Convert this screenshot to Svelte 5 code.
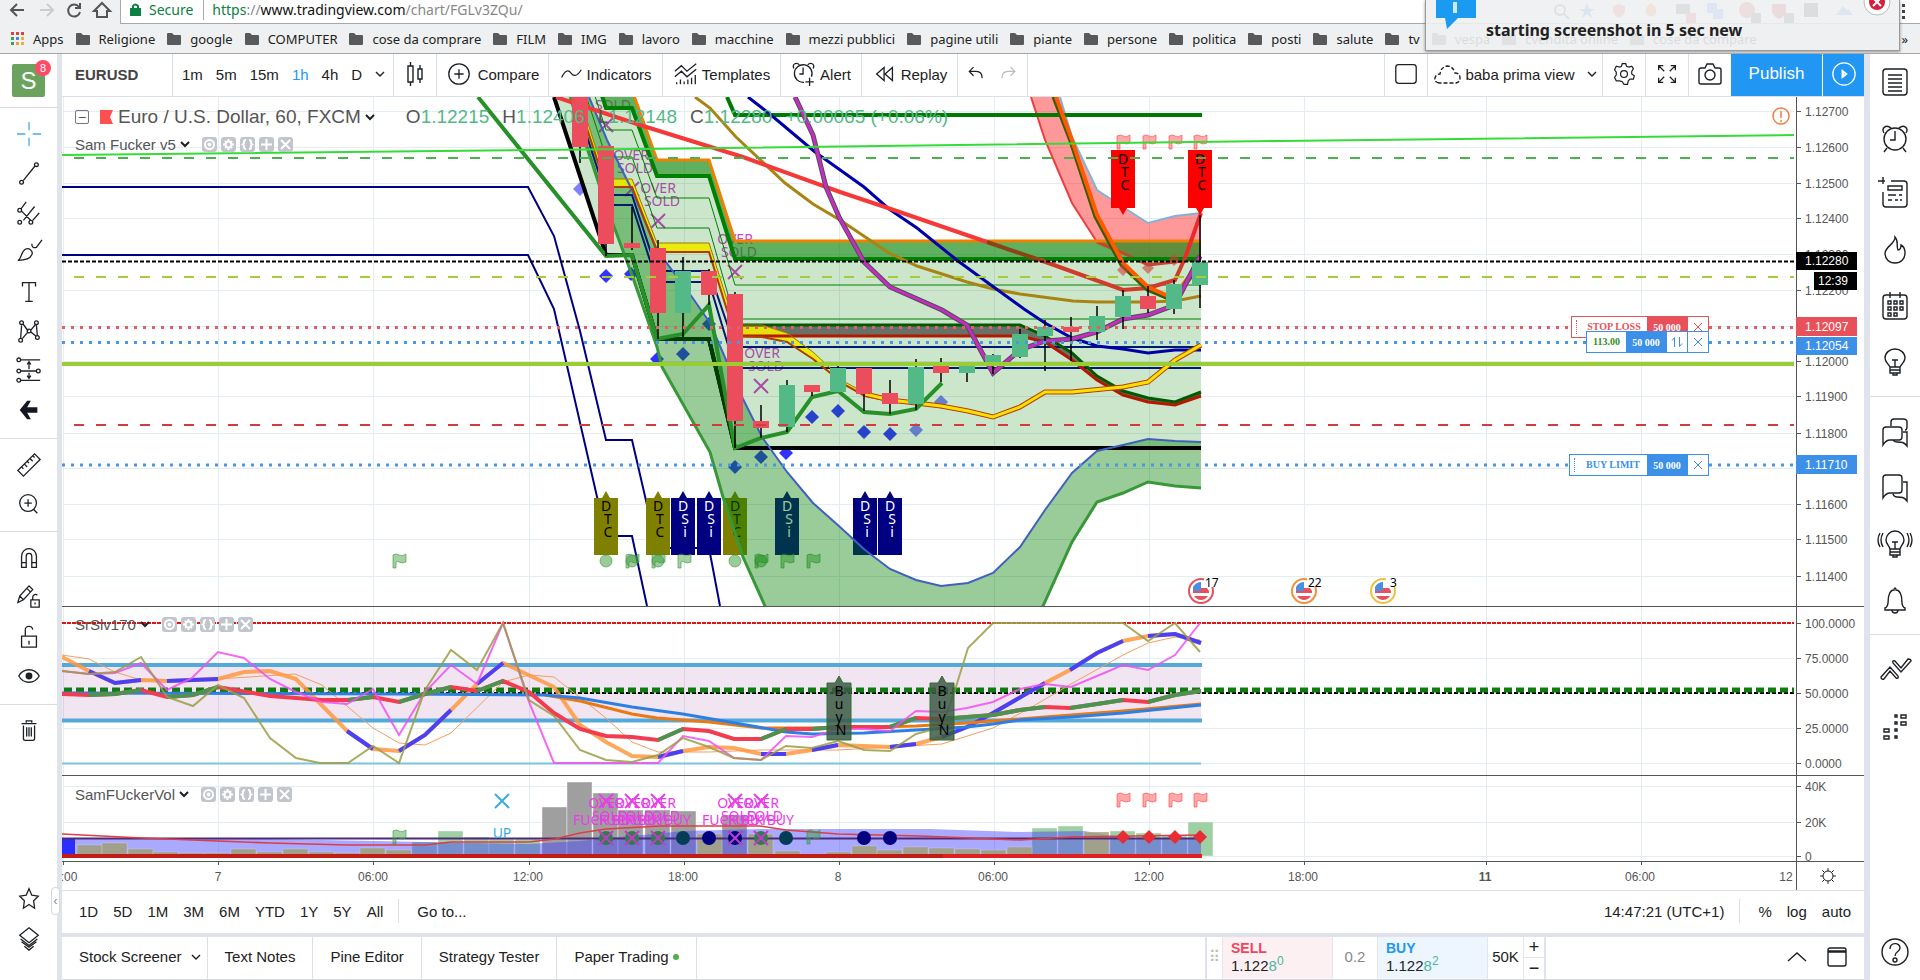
<script>
    const bookmarks = ['Religione', 'google', 'COMPUTER', 'cose da comprare', 'FILM', 'IMG', 'lavoro', 'macchine', 'mezzi pubblici', 'pagine utili', 'piante', 'persone', 'politica', 'posti', 'salute', 'tv', 'vespa', 'cvendita online', 'cose da compare'];
    const appColors = ['#d8453b', '#d8453b', '#d8453b', '#3f9c5a', '#4a86e8', '#e8b23a', '#3f9c5a', '#e8a33a', '#e8b23a'];

    // stroke icons, 28 x 28
    const icons = {
        cross: 'M14 1v9M14 18v9M1 14h9M18 14h9',
        line: 'M8 22L20 7M8 24a2 2 0 1 1-4 0a2 2 0 1 1 4 0M24 5a2 2 0 1 1-4 0a2 2 0 1 1 4 0',
        fork: 'M5 10L11 2M6 12L16 22M8 22L20 7M18 22L25 14M6 11a2 2 0 1 1-4 0a2 2 0 1 1 4 0M6 24a2 2 0 1 1-4 0a2 2 0 1 1 4 0M18 24a2 2 0 1 1-4 0a2 2 0 1 1 4 0',
        brush: 'M2 23c4-1 3-9 8-12c4-2 9 2 7 6c-2 5-8 6-15 6zM17 5c0 4 2 5 5 4l6-8',
        text: 'M7 8V4h14v4M14 4v20M10 24h8',
        pattern: 'M6 8L5 22M8 7l5 7M16 13l5-6M7 22l6-7M16 15l6 5M22 8l1 11M8 5a2 2 0 1 1-4 0a2 2 0 1 1 4 0M24 5a2 2 0 1 1-4 0a2 2 0 1 1 4 0M16 14a2 2 0 1 1-4 0a2 2 0 1 1 4 0M7 24a2 2 0 1 1-4 0a2 2 0 1 1 4 0M25 21a2 2 0 1 1-4 0a2 2 0 1 1 4 0',
        range: 'M5 2h21M5 14h17M5 24h21M14 5v7M14 16v6M12 7l2-3l2 3M12 19l2 3l2-3M5 2a2 2 0 1 1-4 0a2 2 0 1 1 4 0M5 14a2 2 0 1 1-4 0a2 2 0 1 1 4 0M26 14a2 2 0 1 1-4 0a2 2 0 1 1 4 0M5 24a2 2 0 1 1-4 0a2 2 0 1 1 4 0',
        ruler: 'M2 20L20 2l6 6L8 26zM6 16l2 2M9 13l3 3M12 10l2 2M15 7l3 3M18 4l2 2',
        zoom: 'M22 13a9 9 0 1 1-18 0a9 9 0 1 1 18 0M19 20l4 4M13 9v8M9 13h8',
        magnet: 'M6 24V12a8 8 0 0 1 16 0v12h-5V12a3 3 0 0 0-6 0v12zM6 19h5M17 19h5',
        penlock: 'M2 20l2-7L14 2l4 4L8 17zM4 13l4 4M12 5l4 4M16 17h9v8h-9zM18 17v-3a3 3 0 0 1 5-2M20.500 20v2',
        lock: 'M6 13h16v12H6zM10 13V7a4 4 0 0 1 8-1M14 18v4',
        eye: 'M3 14c5-9 17-9 22 0c-5 9-17 9-22 0zM16 14a2 2 0 1 1-4 0a2 2 0 1 1 4 0M15 14a1 1 0 1 1-2 0a1 1 0 1 1 2 0M17 14a3 3 0 1 1-6 0a3 3 0 1 1 6 0',
        trash: 'M6 6h16M11 5V3h6v2M8 8v14q0 2 2 2h8q2 0 2-2V8M11.500 10v10M14 10v10M16.500 10v10',
        star: 'M14 4l3 7l7 1l-5 5l1 8l-6-4l-6 4l1-8l-5-5l7-1z',
        layers: 'M14 3l10 8l-10 8l-10-8zM5 15l9 7l9-7M6 18l8 6l8-6M9 23l5 4l5-4',
        list: 'M5 1h18q3 0 3 3v20q0 3-3 3H5q-3 0-3-3V4q0-3 3-3zM7 7h14M7 11h14M7 15h14M7 19h14M7 23h14',
        alarm: 'M25 15a11 11 0 1 1-22 0a11 11 0 1 1 22 0M14 7v9H9M3 9C0 4 5 0 10 4M25 9c3-5-2-9-7-5M6 24l-3 4M22 24l3 4',
        data: 'M10 1h13q3 0 3 3v20q0 3-3 3H5q-3 0-3-3V12M2-3v7M-3 1h7M7 6h14v4H7zM7 15h8M18 15h3M7 20h4M14 20h3M19 20h2',
        flame: 'M14 1c1 6-9 9-10 16c0 6 4 10 10 10s10-4 10-10c0-4-2-7-4-8c0 3-1 5-3 5c-2-4 1-9-3-13z',
        calendar: 'M5 3h18q3 0 3 3v18q0 3-3 3H5q-3 0-3-3V6q0-3 3-3zM9 0v6M19 0v6M7 9h3v3H7zM13 9h3v3h-3zM19 9h3v3h-3zM7 15h3v3H7zM13 15h3v3h-3zM19 15h3v3h-3zM7 21h3v3H7zM13 21h3v3h-3z',
        bulb: 'M9 19c-2-4-5-5-5-9a10 9 0 0 1 20 0c0 4-3 5-5 9zM11 12h6M14 12v7M9 19v6h10v-6M9 22h10M12 25v2h4v-2',
        chats: 'M10 8V4q0-3 3-3h9q4 0 4 3v5q0 3-2 3M5 9h13q3 0 3 3v7q0 3-3 3H9q-4 0-7 5V12q0-3 3-3zM22 14h4v14c-3-4-5-4-10-4q-3 0-4-2',
        chat: 'M5 1h13q3 0 3 3v12q0 3-3 3H9q-4 0-7 5V4q0-3 3-3zM22 8h4v19c-3-4-5-4-10-4q-3 0-4-3',
        live: 'M9 19c-1-4-4-5-4-9a9 9 0 0 1 18 0c0 4-3 5-4 9zM11 12h6M14 12v7M9 19v6h10v-6M9 22h10M12 25v2h4v-2M2 3q-4 7 0 14M-1 3q-4 7 0 14M26 3q4 7 0 14M29 3q4 7 0 14',
        bell: 'M4 22c5-2 2-8 4-13c1-3 3-5 5-5q0-2 1-2q1 0 1 2c2 0 4 2 5 5c2 5-1 11 4 13v2H4zM11 24q0 3 3 3t3-3',
        arrows: 'M0 21l9-10l8 9q1 3-2 2l-6-7l-6 8q-3 1-3-2zM12 7q-1-3 2-2l6 7l7-9q3 0 3 2L20 16z',
        dots: 'M14 3h2v2h-2zM14 10h2v2h-2zM20 3h5v3h-5zM20 10h5v3h-5zM3 17h5v3H3zM3 24h5v3H3zM14 17h2v2h-2zM14 24h2v2h-2z',
        help: 'M27 14a13 13 0 1 1-26 0a13 13 0 1 1 26 0M9 11c0-7 10-7 10-1c0 4-5 3-5 8M16 22a2 2 0 1 1-4 0a2 2 0 1 1 4 0',
        candles: 'M7 6h5v16H7zM9.500 2v4M9.500 22v4M17 9h4v10h-4zM19 5v4M19 19v4',
        plus: 'M25 14a11 11 0 1 1-22 0a11 11 0 1 1 22 0M14 9v10M9 14h10',
        wave: 'M3 18q6-12 11-5t12-4',
        templates: 'M2 11l7-6l6 6l10-8M2 17l7-6l6 6l10-8M4 25v-2M8 25v-5M12 25v-3M16 25v-5M20 25v-7M24 25v-10',
        alert: 'M14 23A9.500 9.500 0 1 1 22 17M13 7v7H9M3 8C1 3 6 1 9 4M24 8c2-5-3-7-6-4M20 18v9M15.500 22.500h9',
        replay: 'M13 7l-8 7l8 7zM22 7l-8 7l8 7z',
        undo: 'M10 6l-5 5l5 5M5 11h8q7 0 7 8',
        redo: 'M17 6l5 5l-5 5M22 11h-8q-7 0-7 8',
        square: 'M6 4h16q3 0 3 3v14q0 3-3 3H6q-3 0-3-3V7q0-3 3-3z',
        cog: 'M12 2h4l1 3l3 1l3-1l2 3l-2 3v3l3 2l-1 4l-4 0l-2 2l-1 4h-4l-2-3l-3-1l-4 0l-2-4l2-3v-3l-2-3l2-4l4 1l2-1zM18 14a4 4 0 1 1-8 0a4 4 0 1 1 8 0',
        full: 'M5 10V5h5M5 5l6 6M18 5h5v5M23 5l-6 6M5 18v5h5M5 23l6-6M23 18v5h-5M23 23l-6-6',
        camera: 'M5 8h4l2-4h6l2 4h4q2 0 2 2v12q0 2-2 2H5q-2 0-2-2V10q0-2 2-2zM19 15a5 5 0 1 1-10 0a5 5 0 1 1 10 0',
        play: 'M26 14a12 12 0 1 1-24 0a12 12 0 1 1 24 0M12 10v8l5-4zM13 12v4l3-2z',
        sun: 'M21 14a7 7 0 1 1-14 0a7 7 0 1 1 14 0M14 3v4M14 21v4M3 14h4M21 14h4M6 6l3 3M19 19l3 3M22 6l-3 3M6 22l3-3',
        remove: 'M6 6l16 16M22 6L6 22',
        swap: 'M9 24V5l-5 6M19 4v19l5-6'
    };

    const drawTools = ['cross', 'line', 'fork', 'brush', 'text', 'pattern', 'range', 'back'];
    const sideTop = ['list', 'alarm', 'data', 'flame', 'calendar', 'bulb'];
    const sideMid = ['chats', 'chat', 'live', 'bell'];
    const ranges = ['1D', '5D', '1M', '3M', '6M', 'YTD', '1Y', '5Y', 'All'];

    const prices = [['1.12700', 111], ['1.12600', 147], ['1.12500', 183], ['1.12400', 218], ['1.12300', 254], ['1.12200', 290], ['1.12000', 361], ['1.11900', 396], ['1.11800', 433], ['1.11600', 504], ['1.11500', 539], ['1.11400', 576]];
    const levels = [['100.0000', 623], ['75.0000', 658], ['50.0000', 693], ['25.0000', 728], ['0.0000', 763], ['40K', 786], ['20K', 822], ['0', 856]];
    const times = [[':00', 69, 63], ['7', 218, 218], ['06:00', 373, 373], ['12:00', 528, 529], ['18:00', 683, 684], ['8', 838, 839], ['06:00', 993, 994], ['12:00', 1149, 1149], ['18:00', 1303, 1304], ['11', 1485, 1486], ['06:00', 1640, 1641], ['12', 1786, 1796]];

    // the channel holds its level on three shelves and drops between them
    const shelf = (a, b, c) => `580,${a - 80} 606,${a} 632,${a} 657,${b} 709,${b} 735,${c} 1201,${c}`;
    const back = (pts) => pts.split(' ').reverse().join(' ');
    const bandTop = shelf(90, 160, 241);
    const bandLow = shelf(108, 176, 259);
    const floor = '554,97 606,255 632,255 657,339 709,339 735,448 1201,448';
    const yellowTop = '580,99 606,179 632,179 657,243 709,243 735,325 762,325 787,333 813,352 845,382 865,393 890,399 916,403 941,405 968,410 993,417 1020,407 1045,392 1072,392 1123,387 1148,382 1175,360 1201,345';
    const yellowLow = '580,107 606,187 632,187 657,252 709,252 735,336 762,337 787,342 813,359 845,385 865,396 890,401 916,404 941,407 968,412 993,418 1020,408 1045,393 1072,393 1123,388 1148,383 1175,361 1201,346';
    const yellowTail = '865,394 890,400 916,403 941,406 968,411 993,417 1020,407 1045,392 1072,392 1123,387 1148,382 1175,360 1201,345';
    const greyTop = '735,325 1020,325 1045,336 1072,353 1097,376 1123,391 1148,398 1175,402 1201,392';
    const greyLow = '735,336 1020,336 1045,342 1072,360 1097,380 1123,395 1148,402 1175,405 1201,396';
    const lowBlue = '589,97 607,140 632,190 657,250 692,297 710,323 743,399 762,437 787,472 813,503 840,527 865,550 890,569 916,580 941,586 968,583 993,573 1020,547 1045,510 1072,473 1097,451 1123,445 1148,439 1175,441 1201,442';
    const lowGreen = '570,97 606,205 632,275 657,347 662,367 710,452 723,497 743,557 765,606 800,680 1000,680 1043,606 1072,542 1097,502 1123,493 1148,482 1175,486 1201,488';
    const redTop = '1060,97 1072,137 1097,190 1123,207 1148,223 1175,216 1201,213';
    const redLow = '1031,97 1045,140 1072,203 1097,242 1123,253 1148,265 1175,262 1201,262';
    const stopLine = '1056,97 1072,140 1097,215 1123,263 1148,287 1173,298 1200,262';
    const stopEdge = '1053,97 1070,141 1095,217 1121,265 1147,290 1173,301 1200,266';
    const violet = '795,97 813,135 826,187 839,217 864,262 890,287 915,298 942,310 967,325 993,373 1020,350 1045,341 1072,339 1097,332 1123,319 1148,315 1175,305 1200,256';

    // x, body top, body bottom, wick top, wick bottom, rising
    const candles = [
        [580, 90, 147, 90, 163, 0], [606, 146, 244, 146, 256, 0], [632, 243, 248, 207, 250, 0], [658, 248, 313, 240, 339, 0],
        [683, 271, 313, 257, 337, 1], [709, 271, 295, 269, 305, 0], [735, 294, 421, 292, 448, 0], [761, 421, 428, 405, 438, 0],
        [787, 385, 427, 380, 432, 1], [812, 385, 392, 385, 396, 0], [838, 368, 392, 366, 392, 1], [864, 368, 394, 368, 411, 0],
        [890, 393, 404, 380, 414, 0], [916, 367, 404, 359, 410, 1], [941, 366, 373, 358, 382, 0], [967, 366, 373, 366, 382, 1],
        [993, 355, 363, 354, 374, 1], [1020, 334, 357, 329, 358, 1], [1045, 327, 336, 320, 371, 1], [1071, 327, 332, 317, 361, 0],
        [1097, 316, 332, 306, 340, 1], [1123, 296, 317, 290, 329, 1], [1148, 296, 309, 286, 313, 0], [1174, 284, 309, 280, 314, 1],
        [1200, 262, 285, 215, 308, 1]
    ];
    const diamonds = [[580, 189, .5], [606, 276, .8], [631, 274, .8], [657, 359, .8], [683, 354, .8], [709, 324, .8], [735, 467, .8], [761, 457, .8], [786, 453, .8], [812, 417, .8], [838, 411, .8], [864, 432, .8], [890, 434, .8], [916, 430, .5], [941, 402, .5]];
    const tags = [[606, 'DTC'], [658, 'DTC'], [683, 'DSi'], [709, 'DSi'], [735, 'DTC'], [787, 'DSi'], [865, 'DSi'], [890, 'DSi']];
    const over = [[631, 155, 606, 125], [658, 188, 632, 189], [735, 239, 658, 221], [762, 353, 735, 272], [609, 92, 761, 386]];
    const flags = [399, 632, 658, 684, 761, 787, 813];
    const dots = [606, 632, 658, 735, 761];

    const magenta = '62,671 89,674 115,673 141,663 167,690 192,678 218,652 244,658 270,679 296,692 322,702 347,704 373,689 399,735 425,692 451,665 477,684 503,623 529,702 554,763 658,763 683,736 709,741 734,758 761,760 786,736 812,737 838,729 864,729 890,731 916,711 942,712 967,708 993,702 1020,689 1045,684 1071,687 1097,676 1123,665 1148,670 1175,655 1200,623';
    const olive = '62,671 89,674 115,672 141,657 167,697 193,706 218,685 244,698 270,738 296,758 320,763 348,763 373,746 399,763 425,690 451,650 477,670 503,623 529,700 554,716 580,750 606,760 632,762 658,755 683,738 709,747 734,758 761,760 786,746 812,748 838,741 864,750 890,751 916,734 942,727 955,690 968,648 993,623 1123,623 1148,641 1175,623 1200,652';
    const signal = '62,655 89,659 115,672 141,680 218,679 295,674 322,685 373,728 399,743 425,745 451,733 503,682 529,675 554,677 606,718 632,742 658,752 709,752 761,750 838,750 942,744 993,728 1030,708 1071,684 1123,655 1148,643 1175,637 1200,640';
    const fast = '62,657 89,671 115,683 141,680 167,681 218,679 244,672 270,671 296,679 347,731 373,749 399,751 425,735 451,710 477,684 503,663 554,687 580,725 606,742 632,756 658,757 683,751 709,747 734,748 761,754 786,754 812,750 838,745 890,747 916,744 942,737 967,727 993,713 1045,683 1070,670 1097,653 1123,641 1148,636 1175,634 1201,643';
    const fastBlue = ['89,671 115,683 141,680', '167,681 218,679', '347,731 373,749', '399,751 425,735 451,710', '477,684 503,663', '658,757 683,751', '761,754 786,754', '812,750 838,745', '890,747 916,744', '942,737 967,727 993,713 1045,683', '1070,670 1097,653 1123,641', '1148,636 1175,634 1201,643'];
    const slow = '62,694 89,695 115,694 141,690 167,697 193,695 218,687 270,696 322,700 348,700 373,697 399,702 425,694 451,687 477,691 503,681 529,692 554,713 580,729 606,736 632,737 658,740 683,729 709,731 734,739 761,739 786,729 812,729 838,727 890,727 916,718 941,719 967,717 993,715 1020,710 1045,707 1070,708 1097,704 1123,700 1148,702 1175,695 1201,691';
    const slowGreen = ['89,695 115,694 141,690', '167,697 193,695 218,687', '348,700 373,697', '399,702 425,694 451,687', '477,691 503,681', '658,740 683,729', '761,739 786,729', '812,729 838,727', '890,727 916,718', '941,719 967,717 993,715 1020,710 1045,707', '1070,708 1097,704 1123,700', '1148,702 1175,695 1201,691'];

    // x, top, kind
    const volumes = [[77, 845, 'o'], [102, 843, 'o'], [128, 849, 'o'], [153, 852, 'o'], [179, 853, 'o'], [205, 853, 'o'], [231, 849, 'o'], [257, 852, 'o'], [283, 849, 'o'], [309, 852, 'o'], [335, 853, 'o'], [360, 848, 'o'], [386, 850, 'o'], [412, 842, 'g'], [438, 831, 'g'], [464, 837, 'g'], [489, 839, 'g'], [515, 839, 'g'], [542, 807, 'k'], [567, 782, 'k'], [593, 793, 'k'], [618, 810, 'k'], [645, 810, 'k'], [671, 811, 'k'], [697, 834, 'o'], [722, 815, 'k'], [748, 834, 'o'], [775, 851, 'o'], [826, 852, 'o'], [852, 846, 'o'], [877, 850, 'o'], [903, 847, 'o'], [929, 848, 'o'], [955, 849, 'o'], [981, 850, 'o'], [1007, 847, 'o'], [1032, 828, 'g'], [1058, 826, 'g'], [1084, 832, 'o'], [1110, 831, 'g'], [1136, 833, 'g'], [1162, 836, 'g'], [1188, 822, 'g']];
    const volArea = '62,838 218,838 322,840 425,842 529,844 580,841 632,836 684,831 760,829 930,829 1020,832 1085,831 1123,838 1201,838 1201,855 62,855';
    const volLine = '62,834 142,838 270,843 348,845 425,845 451,842 529,842 555,839 580,833 606,829 660,826 760,826 786,830 838,834 920,836 1020,840 1071,837 1200,835';
    const sold = [606, 632, 658, 735, 761];
    const balls = [[606, '#2f7d4a'], [632, '#2f7d4a'], [658, '#2f7d4a'], [683, '#063c55'], [709, '#000080'], [735, '#000080'], [761, '#2f7d4a'], [786, '#063c55'], [864, '#000080'], [890, '#000080']];
    const redFlags = [1123, 1149, 1175, 1200];

    let interval = '1h';
    const intervals = ['1m', '5m', '15m', '1h', '4h', 'D'];
</script>

{#snippet icon(name, size = 28)}
    <svg class="icon" width={size} height={size} viewBox="0 0 28 28" aria-hidden="true">
        {#if name === 'back'}
            <path class="solid" d="M12 4L4 14l8 10h4l-4-7h11v-6H12l4-7z" />
        {:else}
            <path d={icons[name]} />
        {/if}
    </svg>
{/snippet}

{#snippet caret()}
    <svg class="icon" width="10" height="8" viewBox="0 0 10 8" aria-hidden="true"><path d="M1 2l4 4l4-4" /></svg>
{/snippet}

{#snippet legendButtons()}
    {#each ['hide', 'settings', 'source', 'more', 'remove'] as action, i}
        <button class="mini" aria-label={action}>
            <svg width="15" height="15" viewBox="0 0 15 15">
                {#if i === 0}<circle cx="7.500" cy="7.500" r="4.500" /><circle cx="7.500" cy="7.500" r="1" />
                {:else if i === 1}<circle cx="7.500" cy="7.500" r="3" /><path d="M7.500 2v2M7.500 11v2M2 7.500h2M11 7.500h2M4 4l1 1M10 10l1 1M11 4l-1 1M4 11l1-1" />
                {:else if i === 2}<path d="M6 3q-2 0-2 2t-1 2.500q1 .5 1 2.500t2 2M9 3q2 0 2 2t1 2.500q-1 .5-1 2.500t-2 2" />
                {:else if i === 3}<path d="M7.500 2v11M2 7.500h11" />
                {:else}<path d="M3 3l9 9M12 3l-9 9" />{/if}
            </svg>
        </button>
    {/each}
{/snippet}

{#snippet flag(x, y, color)}
    <path d="M{x - 6} {y + 7}v-13q4-2 6 0q3 2 7-1v8q-4 2-7 0q-1-1-3 0v6z" fill={color} fill-opacity="0.45" stroke={color} stroke-opacity="0.6" />
{/snippet}

{#snippet cross(x, y, color)}
    <path d="M{x - 7} {y - 7}l14 14M{x + 7} {y - 7}l-14 14" stroke={color} stroke-width="2" fill="none" />
{/snippet}

{#snippet coin(x, n, color)}
    <circle cx={x} cy="591" r="12" fill="#fff" stroke={color} stroke-width="2" />
    <path d="M{x - 8} 591v-4q3-5 8-5v9z" fill="#4a90e2" />
    <path d="M{x} 588h6l2 3v2h-16v-2h8zM{x - 7} 596h14q-3 4-7 4t-7-4z" fill="#e8505b" />
    <path d="M{x + 3} 577h14v10h-14z" fill="#fff" />
    <text class="note" x={n.length > 1 ? x + 4 : x + 7} y="587">{n}</text>
{/snippet}

<div class="page">
    <header class="browser">
        <div class="address">
            <svg class="nav" width="120" height="23" viewBox="0 0 120 23">
                <path d="M24 10H12M17 4l-6 6l6 6" stroke="#555" />
                <path d="M40 10h12M47 4l6 6l-6 6" stroke="#ccc" />
                <path d="M79 7a6 6 0 1 0 1 5M80 3v5h-5" stroke="#555" />
                <path d="M94 11l8-8l8 8h-3v6H97v-6z" stroke="#555" />
            </svg>
            <div class="url">
                <svg width="11" height="14" viewBox="0 0 11 14"><path d="M0 5h11v8H0z" fill="#0b8043" /><path d="M3 6V3q2-3 5 0v3" fill="none" stroke="#0b8043" stroke-width="2" /></svg>
                <span class="secure">Secure</span>
                <a href="https://www.tradingview.com/chart/FGLv3ZQu/"><span class="https">https</span>://<b>www.tradingview.com</b>/chart/FGLv3ZQu/</a>
            </div>
            <svg class="extensions" width="370" height="23" viewBox="0 0 370 23">
                <circle cx="25" cy="10" r="5" fill="none" stroke="#555" stroke-width="2" /><path d="M29 14l5 5" stroke="#555" stroke-width="2" />
                <path d="M52 3l2 6h6l-5 3l2 6l-5-4l-5 4l2-6l-5-3h6z" fill="#3b78e7" />
                <path d="M78 6l6-2l6 2v5q-1 5-6 7q-5-2-6-7z" fill="#f35b5b" />
                <path d="M116 3q7 5 5 11q-5 5-10 0q-2-6 5-11z" fill="#f0862c" />
                <path d="M141 4h14v10h-14z" fill="#555" /><path d="M151 13h10v10h-10z" fill="#e04040" />
                <path d="M172 3h10v10h-10zM178 9h10v10h-10z" fill="#5b8def" />
                <circle cx="212" cy="10" r="8" fill="#e04040" /><path d="M216 13h10v10h-10z" fill="#555" />
                <path d="M237 4h14v8q-2 5-7 7q-5-2-7-7z" fill="#c03030" /><path d="M249 13h10v10h-10z" fill="#555" />
                <path d="M269 3h14v14h-14z" fill="#333" />
                <path d="M301 15l7-9l8 9zM309 15l4-6l5 6z" fill="#5b8def" />
            </svg>
            <button class="more" aria-label="Menu"><svg width="4" height="18" viewBox="0 0 4 18"><path d="M0 1h3v3H0zM0 7h3v3H0zM0 13h3v3H0z" fill="#444" /></svg></button>
        </div>
        <nav class="bookmarks">
            <a href="#apps" class="apps">
                <span class="dots">{#each appColors as c}<i style="background:{c}"></i>{/each}</span>Apps
            </a>
            {#each bookmarks as name}
                <a href="#{name}"><svg width="14" height="12" viewBox="0 0 14 12"><path d="M0 1q0-1 1-1h4l2 2h6q1 0 1 1v8q0 1-1 1H1q-1 0-1-1z" fill="#58595b" /></svg>{name}</a>
            {/each}
            <span class="overflow">»</span>
        </nav>
        <div class="toast">
            <svg width="40" height="30" viewBox="0 0 40 30"><path d="M0 0h40v18H22L11 29L9 18H0z" fill="#1a9af0" /><path d="M19 2v11" stroke="#cfe8fb" stroke-width="4" /></svg>
            <strong>starting screenshot in 5 sec new</strong>
            <button class="close" aria-label="Close"><svg width="28" height="16" viewBox="0 0 28 16"><circle cx="14" cy="2" r="13" fill="#fff" stroke="#bbb" /><circle cx="14" cy="2" r="8" fill="#d4213d" /><path d="M10-2l8 8M18-2l-8 8" stroke="#fff" stroke-width="2" /></svg></button>
        </div>
    </header>

    <div class="workspace">
        <aside class="left">
            <div class="user"><span class="avatar">S</span><span class="badge">8</span></div>
            <div class="tools draw">{#each drawTools as t}<button class:active={t === 'cross'} aria-label={t}>{@render icon(t)}</button>{/each}</div>
            <div class="tools two"><button aria-label="Measure">{@render icon('ruler')}</button><button aria-label="Zoom">{@render icon('zoom')}</button></div>
            <div class="tools four">{#each ['magnet', 'penlock', 'lock', 'eye'] as t}<button aria-label={t}>{@render icon(t)}</button>{/each}</div>
            <div class="tools one"><button aria-label="Remove drawings">{@render icon('trash')}</button></div>
            <div class="tools bottom"><button aria-label="Favourites">{@render icon('star')}</button><button aria-label="Object tree">{@render icon('layers')}</button></div>
            <button class="handle" aria-label="Collapse">‹</button>
        </aside>

        <main>
            <div class="toolbar">
                <button class="symbol">EURUSD</button>
                <div class="cell intervals">
                    {#each intervals as i}
                        <button class:active={interval === i} on:click={() => (interval = i)}>{i}</button>
                    {/each}
                    <button aria-label="More intervals">{@render caret()}</button>
                </div>
                <button class="cell only" aria-label="Chart type">{@render icon('candles')}</button>
                <button class="cell compare">{@render icon('plus', 26)}Compare</button>
                <button class="cell indicators">{@render icon('wave', 24)}Indicators</button>
                <button class="cell templates">{@render icon('templates', 26)}Templates</button>
                <button class="cell alert">{@render icon('alert', 26)}Alert</button>
                <button class="cell replay">{@render icon('replay', 26)}Replay</button>
                <div class="cell history">
                    <button aria-label="Undo">{@render icon('undo', 24)}</button>
                    <button aria-label="Redo" class="faint">{@render icon('redo', 24)}</button>
                </div>
                <span class="spacer"></span>
                <button class="cell only" aria-label="Layout">{@render icon('square', 26)}</button>
                <button class="cell view">
                    <svg class="icon" width="28" height="24" viewBox="0 0 28 24"><path stroke-dasharray="4 2" d="M6 21q-5-1-4-5q1-4 5-4q1-7 7-8q6 0 8 7q5 0 5 5q0 4-4 5z" /></svg>
                    baba prima view <span class="tail">{@render caret()}</span>
                </button>
                <button class="cell only" aria-label="Properties">{@render icon('cog', 24)}</button>
                <button class="cell only" aria-label="Fullscreen">{@render icon('full', 26)}</button>
                <button class="cell only" aria-label="Snapshot">{@render icon('camera', 28)}</button>
                <button class="publish">Publish</button>
                <button class="publish go" aria-label="Start">{@render icon('play', 26)}</button>
            </div>

            <div class="chart">
                <svg class="canvas" viewBox="62 97 1802 793">
                    <defs>
                        <clipPath id="main"><rect x="62" y="97" width="1734" height="509" /></clipPath>
                        <clipPath id="vol"><rect x="62" y="776" width="1734" height="84" /></clipPath>
                    </defs>
                    <g class="grid">
                        {#each [...prices, ...levels] as [, y]}<path d="M63 {y}.500H1794" />{/each}
                        <path d="M63 326.500H1794M63 468.500H1794" />
                        {#each times as [, , x]}<path d="M{x}.500 97V861" />{/each}
                    </g>

                    <g clip-path="url(#main)">
                        <g class="curve">
                            <polyline points="62,187 528,187 554,236 580,331 606,440 632,440 657,548 709,548 720,606" stroke="#000080" stroke-width="2" />
                            <polyline points="62,255 528,255 554,309 606,536 632,536 647,606" stroke="#000080" stroke-width="2" />
                        </g>

                        {#each diamonds as [x, y, o]}
                            <path d="M{x} {y - 7}l7 7l-7 7l-7-7z" fill="#0000ff" opacity={o} />
                        {/each}
                        {#each over as [x, y, cx, cy]}
                            <text class="mark" x={x} y={y + 5} fill="#d23fd2">OVER</text>
                            <text class="mark" x={x + 4} y={y + 18} fill="#d23fd2">SOLD</text>
                            {@render cross(cx, cy, '#d23fd2')}
                        {/each}
                        {#each tags as [x, label]}
                            <path d="M{x - 12} 498h8l4-7l4 7h8v57h-24z" fill={label === 'DTC' ? '#808000' : '#000080'} />
                            {#each label.split('') as ch, i}
                                <text class="mark" x={x + (i ? 2 : 0)} y={511 + i * 13} fill={label === 'DTC' ? '#000' : '#fff'}>{ch}</text>
                            {/each}
                        {/each}
                        {#each dots as x}<circle cx={x} cy="561" r="6" fill="#389838" fill-opacity="0.5" stroke="#389838" stroke-opacity="0.6" />{/each}
                        {#each flags as x}{@render flag(x, 561, '#389838')}{/each}

                        <polygon points="{redTop} {back(redLow)}" fill="#ff0000" fill-opacity="0.4" />
                        <polygon points="{bandLow} {back(floor)}" fill="#008000" fill-opacity="0.2" />
                        <polygon points="{bandTop} {back(bandLow)}" fill="#138a13" fill-opacity="0.68" />
                        <polygon points="{greyTop} {back(greyLow)}" fill="#333" fill-opacity="0.65" />
                        <polygon points="{lowBlue} {back(lowGreen)}" fill="#008000" fill-opacity="0.4" />
                        <polygon points="{yellowTop} {back(yellowLow)}" fill="#eeea00" fill-opacity="0.92" />

                        <g class="curve">
                            <polyline points={shelf(130, 198, 285)} stroke="#008000" />
                            <polyline points={shelf(157, 228, 319)} stroke="#008000" />
                            <polyline points={shelf(195, 271, 347)} stroke="#001a70" stroke-width="2" />
                            <polyline points={shelf(205, 282, 368)} stroke="#001a70" stroke-width="2" />
                            <polyline points={redTop} stroke="#80b4d4" stroke-width="2" />
                            <polyline points="1031,97 1045,140 1072,203 1097,242" stroke="#f03c3c" stroke-width="2" />
                            <polyline points="1097,242 1123,253 1148,265 1175,262 1190,260" stroke="#c8442c" stroke-width="3" />
                            <polyline points={bandTop} stroke="#f08000" stroke-width="3" />
                            <polyline points={bandLow} stroke="#008000" stroke-width="4" />
                            <polyline points={floor} stroke="#000" stroke-width="4" />
                            <polyline points="632,255 657,339 709,339 735,448" stroke="#003c00" stroke-width="4" />
                            <polyline points={lowBlue} stroke="#4060c0" stroke-width="2" />
                            <polyline points={lowGreen} stroke="#389838" stroke-width="3" />
                            <polyline points="727,97 735,115 1202,115" stroke="#007a00" stroke-width="4" />
                            <polyline points="695,97 710,108 736,137 785,183 813,204 840,220 889,253 917,266 942,274 967,282 993,289 1020,294 1073,301 1097,302 1148,302 1175,301 1201,296" stroke="#a88412" stroke-width="3" />
                            <polyline points="748,97 771,115 815,152 864,187 889,209 917,228 958,261 995,288 1024,309 1045,323 1072,338 1097,346 1123,349 1148,353 1175,350 1201,350" stroke="#0000aa" stroke-width="3" />
                            <polyline points="556,97 640,125 743,157 840,192 885,207 987,242" stroke="#f53838" stroke-width="4" />
                            <polyline points="987,242 1040,260" stroke="#8c4414" stroke-width="4" />
                            <polyline points="1040,260 1123,290 1148,288 1175,280 1185,258" stroke="#d03c28" stroke-width="4" />
                            <polyline points="1185,258 1201,213" stroke="#ee2828" stroke-width="4" />
                            <polyline points={greyTop} stroke="#005a00" stroke-width="3" />
                            <polyline points={greyLow} stroke="#b41800" stroke-width="3" />
                            <polyline points={yellowTop} stroke="#a07800" stroke-width="1" />
                            <polyline points={yellowLow} stroke="#b03c00" stroke-width="2" />
                            <polyline points={yellowTail} stroke="#b4400c" stroke-width="5" />
                            <polyline points={yellowTail} stroke="#ffe000" stroke-width="3" />
                            <polyline points={stopEdge} stroke="#3c5a00" stroke-width="3" />
                            <polyline points={stopLine} stroke="#ff5a00" stroke-width="4" />
                            <polyline points={violet} stroke="#505050" stroke-width="5" />
                            <polyline points={violet} stroke="#c42cc4" stroke-width="3" />
                            <polyline points="478,97 606,256 632,255 657,339 683,334 709,305 735,448 761,438 787,432 812,397 838,391 864,412 890,414 916,409 942,383" stroke="#289028" stroke-width="4" />
                        </g>

                        {#each candles as [x, top, bottom, high, low, up]}
                            <path d="M{x} {high}V{low}" stroke="#000" stroke-width="1.500" />
                            <rect x={x - 8} y={top} width="16" height={bottom - top} fill={up ? '#53b987' : '#eb4d5c'} />
                        {/each}

                        {#each [[1123, 270], [1148, 268], [1174, 260]] as [x, y]}
                            <path d="M{x} {y - 6}l6 6l-6 6l-6-6z" fill="#d04030" opacity="0.6" />
                        {/each}
                        {#each redFlags as x}{@render flag(x, 142, '#ff4040')}{/each}
                        {#each [1123, 1200] as x}
                            <path d="M{x - 12} 150h24v58h-8l-4 7l-4-7h-8z" fill="#ff0000" />
                            <text class="mark" x={x} y="164">D</text>
                            <text class="mark" x={x + 2} y="177">T</text>
                            <text class="mark" x={x + 2} y="190">C</text>
                        {/each}

                        <g class="curve">
                            <path d="M62 155L640 149L1280 141L1794 135" stroke="#36dc36" stroke-width="2" />
                            <path d="M74 158H1794" stroke="#4caf50" stroke-width="2" stroke-dasharray="10 12" />
                            <path d="M74 277H1794" stroke="#a4cc3c" stroke-width="2" stroke-dasharray="10 12" />
                            <path d="M74 425H1794" stroke="#d23c3c" stroke-width="2" stroke-dasharray="10 12" />
                            <path d="M62 261.500H1794" stroke="#000" stroke-width="2" stroke-dasharray="4 2" />
                            <path d="M62 327.500H1794" stroke="#e06064" stroke-width="3" stroke-dasharray="3 6" />
                            <path d="M62 342.500H1794M62 465H1794" stroke="#4a96e4" stroke-width="3" stroke-dasharray="3 6" />
                            <path d="M62 364H1794" stroke="#9acd32" stroke-width="4" />
                        </g>
                        {@render coin(1201, '17', '#e8505b')}
                        {@render coin(1304, '22', '#f0903c')}
                        {@render coin(1383, '3', '#f0c040')}
                        <g fill="none" stroke="#f08040" stroke-width="1.500"><circle cx="1781" cy="116" r="8" /><path d="M1781 111v7M1781 120v2" /></g>
                    </g>

                    <rect x="62" y="665" width="1139" height="56" fill="#800080" fill-opacity="0.1" />
                    <g class="curve">
                        <path d="M62 763.500H1201" stroke="#7cc4de" stroke-width="2" />
                        <path d="M62 665H1202M62 720.500H1202" stroke="#52a9da" stroke-width="4" />
                        <path d="M62 623H1794" stroke="#e01414" stroke-width="2" stroke-dasharray="4 1" />
                        <path d="M62 693H1794" stroke="#000" stroke-width="2" stroke-dasharray="4 2" />
                        <path d="M64 690H1794" stroke="#107c10" stroke-width="5" stroke-dasharray="8 4" />
                        <polyline points={signal} stroke="#f0a060" />
                        <polyline points={fast} stroke="#ff9840" stroke-width="4" opacity="0.85" />
                        {#each fastBlue as pts}<polyline points={pts} stroke="#4a40f4" stroke-width="4" />{/each}
                        <polyline points="545,695 580,701 632,714 657,718 709,722 761,728 838,728 916,726 967,723 1045,717 1123,711 1201,704" stroke="#ec7814" stroke-width="3" />
                        <polyline points="62,693 400,694 545,695 580,698 632,707 683,714 735,723 786,732 812,734 864,733 916,730 967,727 993,724 1020,720 1071,717 1123,713 1201,705" stroke="#2c80e4" stroke-width="3" />
                        <polyline points={slow} stroke="#f43c50" stroke-width="4" />
                        {#each slowGreen as pts}<polyline points={pts} stroke="#4a9450" stroke-width="4" />{/each}
                        <polyline points={magenta} stroke="#f050f0" stroke-width="2" opacity="0.85" />
                        <polyline points={olive} stroke="#9c9c44" stroke-width="2" opacity="0.85" />
                    </g>
                    {#each [839, 942] as x}
                        <path d="M{x - 12} 683h8l4-7l4 7h8v57h-24z" fill="#3c5a44" fill-opacity="0.85" stroke="#2c7030" />
                        {#each 'BuyN'.split('') as ch, i}<text class="mark" x={x + (i === 3 ? 2 : 0)} y={696 + i * 13}>{ch}</text>{/each}
                    {/each}

                    <g clip-path="url(#vol)">
                        {#each volumes.filter((v) => v[2] !== 'o') as [x, top, kind]}<rect class="vol {kind}" x={x} y={top} width="25" height={856 - top} />{/each}
                        <polygon points={volArea} fill="#4040ff" fill-opacity="0.45" />
                        {#each volumes.filter((v) => v[2] === 'o') as [x, top]}<rect class="vol o" x={x} y={top} width="25" height={856 - top} />{/each}
                        <rect x="62" y="838" width="13" height="18" fill="#2c2cff" />
                        <g class="curve">
                            <path d="M62 838.500H1201" stroke="#4c2c78" stroke-width="2" />
                            <polyline points={volLine} stroke="#e03c44" stroke-width="1.500" />
                            <path d="M62 856H1202" stroke="#e02020" stroke-width="4" />
                            <path d="M62 856H943" stroke="#c41c14" stroke-width="4" />
                        </g>
                        {@render flag(399, 837, '#389838')}
                        {@render flag(813, 837, '#389838')}
                        {@render cross(502, 801, '#3aace0')}
                        <text class="mark" x="502" y="838" fill="#3aace0">UP</text>
                        {#each balls as [x, c]}<circle cx={x} cy="838" r="7" fill={c} />{/each}
                        {#each sold as x}
                            {@render cross(x, 801, '#e83ce8')}
                            {@render cross(x, 838, '#c03cc8')}
                            <text class="mark" x={x} y="808" fill="#e83ce8">OVER</text>
                            <text class="mark" x={x + 4} y="821" fill="#e83ce8">SOLD</text>
                            <text class="mark" x={x} y="825" fill="#e83ce8">FUCK BUY</text>
                        {/each}
                        {#each redFlags as x}
                            {@render flag(x, 800, '#ff4040')}
                            <path d="M{x} 830l7 7l-7 7l-7-7z" fill="#e82c34" />
                        {/each}
                    </g>

                    <g class="frame">
                        <path d="M62 606.500H1864M62 775.500H1864M62 861.500H1864M1796.500 97V890" />
                        {#each [...prices, ...levels] as [, y]}<path d="M1797 {y}.500h4" />{/each}
                        {#each times as [, , x]}<path d="M{x}.500 862v3" />{/each}
                    </g>
                    {#each [...prices, ...levels] as [label, y]}<text class="axis" x="1805" y={y + 5}>{label}</text>{/each}
                    {#each times as [label, x]}<text class="axis mid" class:bold={label === '11'} x={x} y="881">{label}</text>{/each}
                    <rect x="1796" y="252" width="61" height="18" /><text class="axis inv" x="1805" y="265">1.12280</text>
                    <rect x="1814" y="272" width="43" height="18" /><text class="axis inv" x="1818" y="285">12:39</text>
                    <rect x="1796" y="317" width="61" height="19" fill="#e8515a" /><text class="axis inv" x="1805" y="331">1.12097</text>
                    <rect x="1796" y="337" width="61" height="18" fill="#3c90e8" /><text class="axis inv" x="1805" y="350">1.12054</text>
                    <rect x="1796" y="455" width="61" height="19" fill="#3c90e8" /><text class="axis inv" x="1805" y="469">1.11710</text>
                </svg>

                <div class="legend title">
                    <button class="fold" aria-label="Collapse legend">−</button>
                    <svg width="13" height="14" viewBox="0 0 13 14"><path d="M0 0h13l-3 7l3 7H0z" fill="#ff4f4f" /></svg>
                    <button class="name">Euro / U.S. Dollar, 60, FXCM {@render caret()}</button>
                    <span class="ohlc">O<b>1.12215</b></span>
                    <span class="ohlc">H<b>1.12406</b></span>
                    <span class="ohlc">L<b>1.12148</b></span>
                    <span class="ohlc">C<b>1.12280</b></span>
                    <span class="ohlc"><b>+0.00065 (+0.06%)</b></span>
                </div>
                <div class="legend study one"><button class="name">Sam Fucker v5 {@render caret()}</button>{@render legendButtons()}</div>
                <div class="legend study two"><button class="name">SrSlv170 {@render caret()}</button>{@render legendButtons()}</div>
                <div class="legend study three"><button class="name">SamFUckerVol {@render caret()}</button>{@render legendButtons()}</div>

                <div class="order stop"><span class="grip"></span><span class="kind">STOP LOSS</span><button class="qty">50 000</button><button class="x" aria-label="Cancel stop loss">{@render icon('remove', 14)}</button></div>
                <div class="order position"><span class="kind profit">113.00</span><button class="qty">50 000</button><button class="x" aria-label="Reverse">{@render icon('swap', 14)}</button><button class="x" aria-label="Close position">{@render icon('remove', 14)}</button></div>
                <div class="order limit"><span class="grip"></span><span class="kind">BUY LIMIT</span><button class="qty">50 000</button><button class="x" aria-label="Cancel buy limit">{@render icon('remove', 14)}</button></div>
                <button class="axis-cog" aria-label="Scale settings">{@render icon('sun', 20)}</button>
            </div>

            <div class="rangebar">
                {#each ranges as r}<button>{r}</button>{/each}
                <button class="goto">Go to...</button>
                <span class="spacer"></span>
                <button class="clock">14:47:21 (UTC+1)</button>
                <button class="pct">%</button>
                <button>log</button>
                <button>auto</button>
            </div>

            <div class="tabs">
                <button>Stock Screener <span class="tabcaret">{@render caret()}</span></button>
                <button>Text Notes</button>
                <button>Pine Editor</button>
                <button>Strategy Tester</button>
                <button class="paper">Paper Trading <i></i></button>
                <span class="spacer"></span>
                <div class="trade">
                    <span class="drag">⠿</span>
                    <button class="side sell"><b>SELL</b><span>1.122<em>8<sup>0</sup></em></span></button>
                    <span class="spread">0.2</span>
                    <button class="side buy"><b>BUY</b><span>1.122<em>8<sup>2</sup></em></span></button>
                    <span class="lots">50K</span>
                    <div class="steps"><button>+</button><button>−</button></div>
                </div>
                <div class="panel">
                    <button aria-label="Open panel"><svg class="icon" width="20" height="12" viewBox="0 0 20 12"><path d="M1 10l9-8l9 8" /></svg></button>
                    <button aria-label="Maximize panel"><svg class="icon" width="20" height="20" viewBox="0 0 20 20"><path d="M3 1h14q2 0 2 2v14q0 2-2 2H3q-2 0-2-2V3q0-2 2-2zM1 5h18M1 4h18" /></svg></button>
                </div>
            </div>
        </main>

        <aside class="right">
            <div class="stack">{#each sideTop as t}<button aria-label={t}>{@render icon(t)}</button>{/each}</div>
            <div class="stack">{#each sideMid as t}<button aria-label={t}>{@render icon(t)}</button>{/each}</div>
            <div class="stack last"><button aria-label="Order panel">{@render icon('arrows')}</button><button aria-label="Depth of market">{@render icon('dots')}</button></div>
            <button class="help" aria-label="Help">{@render icon('help')}</button>
        </aside>
    </div>
</div>

<style>
    :global(body) {
        background: #e0e3eb;
    }

    .page {
        min-height: 100vh;
        display: flex;
        flex-direction: column;
        font-family: "Liberation Sans", Arial, sans-serif;
        font-size: 15px;
        color: #222;
    }

    button {
        font: inherit;
        color: inherit;
        background: none;
        border: none;
        padding: 0;
        margin: 0;
        display: flex;
        align-items: center;
        justify-content: center;
        white-space: nowrap;
        cursor: pointer;
    }

    a {
        color: inherit;
        text-decoration: none;
    }

    .icon {
        display: block;
        flex: none;
        overflow: visible;
        fill: none;
        stroke: #1c2024;
        stroke-width: 1.4;
    }

    .icon .solid {
        fill: #131722;
        stroke: none;
    }

    .spacer {
        flex: 1;
    }

    /* browser */
    .browser {
        height: 54px;
        box-sizing: border-box;
        border-bottom: 1px solid #a5a7a8;
        background: #eef0f1;
        position: relative;
        overflow: hidden;
        font-family: "Noto Sans", sans-serif;
        font-size: 13px;
    }

    .address {
        height: 24px;
        display: flex;
        position: relative;
    }

    .nav {
        flex: none;
        fill: none;
        stroke-width: 2;
    }

    .url {
        flex: 1;
        display: flex;
        align-items: center;
        font-size: 14px;
        line-height: 20px;
        padding: 0 0 3px 9px;
        background: #fff;
        border-left: 1px solid #aaa;
        border-bottom: 1px solid #a5a7a8;
    }

    .secure {
        color: #0b8043;
        margin-left: 8px;
        padding-right: 10px;
        border-right: 1px solid #aaa;
        margin-right: 8px;
    }

    .url a {
        color: #888;
    }

    .url b {
        font-weight: normal;
        color: #111;
    }

    .url .https {
        color: #0b8043;
    }

    .extensions {
        position: absolute;
        right: 15px;
        top: 0;
    }

    .more {
        position: absolute;
        right: 14px;
        top: 3px;
    }

    .bookmarks {
        display: flex;
        align-items: center;
        gap: 12px;
        height: 29px;
        padding: 0 12px 0 11px;
        color: #222;
    }

    .bookmarks a {
        display: flex;
        align-items: center;
        gap: 9px;
        white-space: nowrap;
    }

    .dots {
        display: grid;
        grid-template-columns: repeat(3, 3px);
        gap: 2px;
    }

    .dots i {
        height: 3px;
    }

    .overflow {
        margin-left: auto;
    }

    .toast {
        position: absolute;
        top: 0;
        right: 20px;
        width: 463px;
        height: 50px;
        padding-left: 10px;
        display: flex;
        background: rgba(238, 240, 241, 0.9);
        border: 1px solid #9a9a9a;
        border-top: none;
        box-shadow: 0 1px 3px rgba(0, 0, 0, 0.4);
    }

    .toast strong {
        margin: 18px 0 0 10px;
        font-size: 16px;
        line-height: 24px;
    }

    .toast .close {
        margin-left: auto;
        margin-right: 8px;
        align-self: flex-start;
    }

    /* frame */
    .workspace {
        flex: 1;
        display: flex;
    }

    .left {
        width: 57px;
        flex: none;
        display: flex;
        flex-direction: column;
        background: #fff;
        margin-right: 5px;
        position: relative;
    }

    .user {
        height: 53px;
        position: relative;
        border-bottom: 1px solid #dadde0;
    }

    .avatar {
        display: block;
        margin: 10px 0 0 12px;
        width: 33px;
        height: 33px;
        border-radius: 2px;
        background: #6ba35e;
        color: #fff;
        font-size: 24px;
        line-height: 33px;
        text-align: center;
    }

    .badge {
        position: absolute;
        left: 35px;
        top: 6px;
        width: 16px;
        height: 16px;
        border-radius: 8px;
        background: #ff4a68;
        color: #fff;
        font-size: 11px;
        line-height: 16px;
        text-align: center;
    }

    .tools {
        box-sizing: border-box;
        display: flex;
        flex-direction: column;
        padding: 6px 0 8px;
        border-bottom: 1px solid #dadde0;
    }

    .tools button {
        flex: 1;
    }

    .tools .icon {
        width: 26px;
    }

    .tools .active .icon {
        stroke: #4aa8f0;
    }

    .draw {
        height: 331px;
    }

    .two {
        height: 93px;
    }

    .four {
        height: 173px;
    }

    .one {
        height: 54px;
        border: none;
    }

    .bottom {
        height: 102px;
        margin-top: auto;
        border: none;
        padding-bottom: 22px;
        padding-top: 0;
    }

    .handle {
        position: absolute;
        right: -3px;
        bottom: 65px;
        width: 9px;
        height: 28px;
        border: 1px solid #d4d7de;
        border-radius: 4px;
        background: #fff;
        color: #888;
        font-size: 12px;
    }

    main {
        flex: 1;
        min-width: 0;
        display: flex;
        flex-direction: column;
        background: #fff;
    }

    .toolbar {
        display: flex;
        height: 42px;
        border-bottom: 1px solid #dcdfe6;
    }

    .toolbar button {
        padding-bottom: 2px;
    }

    .toolbar .symbol {
        width: 110px;
        padding-left: 13px;
        box-sizing: border-box;
        justify-content: flex-start;
        font-weight: bold;
        color: #444;
    }

    .cell {
        box-sizing: border-box;
        border-left: 1px solid #dcdfe6;
    }

    .intervals {
        width: 221px;
        display: flex;
        padding-left: 9px;
        gap: 13px;
    }

    .intervals .active {
        color: #2196f3;
    }

    .only {
        width: 43px;
    }

    .compare {
        width: 112px;
        gap: 6px;
    }

    .indicators {
        width: 114px;
        gap: 3px;
    }

    .templates {
        width: 118px;
        gap: 3px;
    }

    .alert {
        width: 81px;
        gap: 3px;
    }

    .replay {
        width: 96px;
        gap: 3px;
    }

    .history {
        width: 71px;
        display: flex;
        justify-content: space-evenly;
        border-right: 1px solid #dcdfe6;
    }

    .faint .icon {
        stroke: #bbb;
    }

    .view {
        width: 175px;
        gap: 4px;
    }

    .tail {
        margin-left: 8px;
    }

    .publish {
        width: 91px;
        box-sizing: border-box;
        height: 42px;
        background: #2196f3;
        color: #fff;
        font-size: 17px;
    }

    .go {
        width: 42px;
        border-left: 1px solid #fff;
    }

    .go .icon {
        stroke: #fff;
    }

    /* chart */
    .chart {
        position: relative;
    }

    .canvas {
        display: block;
        width: 100%;
        height: auto;
    }

    .grid path {
        stroke: #e3edf2;
    }

    .frame path {
        stroke: #555;
    }

    .curve {
        fill: none;
    }

    .mark {
        font-family: "Noto Sans", sans-serif;
        font-size: 14px;
        text-anchor: middle;
    }

    .note {
        font-family: "Noto Sans", sans-serif;
        font-size: 12px;
    }

    .axis {
        font-size: 12px;
        fill: #555;
    }

    .mid {
        text-anchor: middle;
    }

    .bold {
        font-weight: bold;
    }

    .inv {
        fill: #fff;
    }

    .vol {
        stroke: #fff;
        stroke-opacity: 0.4;
    }

    .o {
        fill: #9e9e70;
        fill-opacity: 0.8;
        stroke-opacity: 0.2;
    }

    .g {
        fill: #9fd0a3;
    }

    .k {
        fill: #9f9f9f;
    }

    .legend {
        position: absolute;
        left: 13px;
        display: flex;
        align-items: center;
        color: #555;
    }

    .title {
        top: 8px;
        height: 24px;
        font-size: 19px;
    }

    .fold {
        width: 14px;
        height: 14px;
        margin-right: 11px;
        border: 1px solid #777;
        border-radius: 2px;
        font-size: 14px;
    }

    .name {
        gap: 4px;
        margin-right: 8px;
    }

    .name .icon {
        stroke-width: 2;
    }

    .title .name {
        margin: 0 18px 0 5px;
    }

    .ohlc {
        margin-left: 13px;
    }

    .ohlc b {
        font-weight: normal;
        color: #53b987;
    }

    .study {
        height: 20px;
        gap: 4px;
    }

    .study.one {
        top: 37px;
    }

    .study.two {
        top: 517px;
    }

    .study.three {
        top: 687px;
    }

    .mini {
        width: 15px;
        height: 15px;
        border-radius: 3px;
        background: #c3c5cc;
    }

    .mini svg {
        fill: none;
        stroke: #fff;
        stroke-width: 2;
    }

    .order {
        position: absolute;
        right: 155px;
        height: 22px;
        box-sizing: border-box;
        display: flex;
        align-items: stretch;
        border: 1px solid;
        background: #fff;
        font-family: "Liberation Serif", serif;
        font-size: 10px;
        font-weight: bold;
    }

    .kind {
        width: 66px;
        text-align: center;
        line-height: 20px;
    }

    .grip {
        width: 0;
        margin: 3px 4px;
        border-left: 1px dotted;
    }

    .order .qty {
        width: 40px;
        color: #fff;
    }

    .order .x {
        width: 21px;
        border-left: 1px solid;
    }

    .order .icon {
        stroke: currentColor;
        stroke-width: 2;
    }

    .stop {
        top: 219px;
        color: #e8515a;
    }

    .stop .qty {
        background: #e8515a;
    }

    .position {
        top: 234px;
        color: #3c90e8;
    }

    .position .kind {
        width: 39px;
        color: #2f8f1f;
    }

    .limit {
        top: 357px;
        color: #3c90e8;
    }

    .limit .kind {
        width: 68px;
    }

    .position .qty,
    .limit .qty {
        background: #3c90e8;
    }

    .axis-cog {
        position: absolute;
        right: 26px;
        bottom: 4px;
    }

    /* bottom */
    .rangebar {
        display: flex;
        align-items: center;
        gap: 15px;
        box-sizing: border-box;
        height: 43px;
        padding: 0 13px 2px 17px;
        border-top: 1px solid #dcdfe6;
    }

    .goto,
    .pct {
        height: 24px;
        padding-left: 18px;
        border-left: 1px solid #dcdfe6;
    }

    .tabs {
        display: flex;
        height: 42px;
        border-top: 4px solid #e0e3eb;
        border-bottom: 1px solid #d8dbe0;
    }

    .tabs > button {
        padding: 0 17px 3px;
        border-right: 1px solid #dcdfe6;
    }

    .tabs > button:first-child {
        padding: 0 6px 3px 17px;
    }

    .tabcaret {
        margin-left: 9px;
    }

    .paper i {
        width: 6px;
        height: 6px;
        margin-left: 4px;
        border-radius: 3px;
        background: #4caf50;
    }

    .trade {
        display: flex;
        border-left: 2px solid #e0e3eb;
        border-right: 2px solid #e0e3eb;
    }

    .trade > * {
        box-sizing: border-box;
        border-right: 1px solid #e4e6ea;
    }

    .drag,
    .spread,
    .lots {
        display: flex;
        align-items: center;
        justify-content: center;
        padding-bottom: 3px;
    }

    .drag {
        width: 16px;
        color: #bbb;
    }

    .spread {
        width: 45px;
        color: #888;
    }

    .lots {
        width: 36px;
    }

    .side {
        width: 110px;
        padding: 0 0 2px 8px;
        flex-direction: column;
        align-items: flex-start;
        line-height: 17px;
    }

    .side b {
        font-size: 14px;
    }

    .side em {
        font-style: normal;
        color: #4db6a0;
    }

    .side sup {
        font-size: 12px;
        line-height: 1px;
    }

    .sell {
        background: #fdf0f2;
    }

    .sell b {
        color: #f0455f;
    }

    .buy {
        background: #edf6fe;
    }

    .buy b {
        color: #2196f3;
    }

    .steps {
        width: 20px;
        border: none;
    }

    .steps button {
        width: 20px;
        height: 21px;
        font-size: 18px;
    }

    .steps button:first-child {
        border-bottom: 1px solid #e4e6ea;
    }

    .panel {
        width: 318px;
        box-sizing: border-box;
        padding: 0 17px 2px 0;
        display: flex;
        align-items: center;
        justify-content: flex-end;
        gap: 20px;
    }

    .right {
        width: 50px;
        flex: none;
        margin-left: 6px;
        display: flex;
        flex-direction: column;
        background: #fff;
    }

    .stack {
        padding-bottom: 6px;
        border-bottom: 1px solid #dadde0;
    }

    .stack + .stack {
        padding-top: 7px;
    }

    .stack.last {
        border: none;
    }

    .right button {
        width: 50px;
        height: 56px;
    }

    .right .help {
        margin-top: auto;
    }
</style>
